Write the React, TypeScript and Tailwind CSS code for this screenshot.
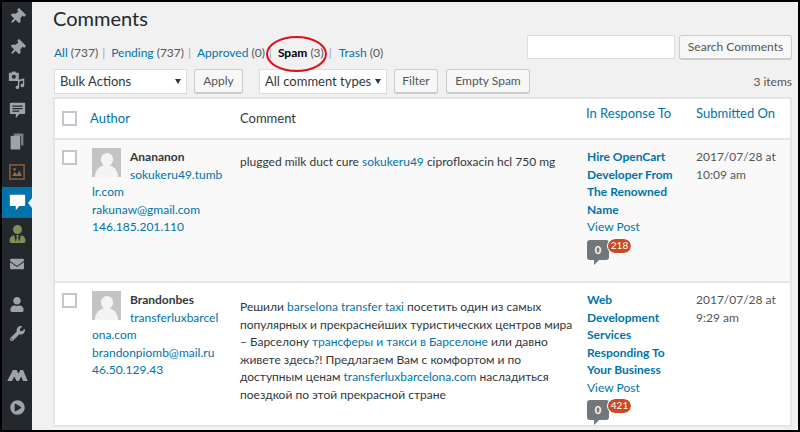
import type { ReactNode } from 'react';
import { FaThumbtack, FaUser, FaUserTie, FaWrench, FaPlayCircle, FaEnvelope } from 'react-icons/fa';

const link = 'text-[#0073aa]';

function MediaIcon() {
  return (
    <svg viewBox="0 0 20 20" className="w-[18px] h-[18px]" fill="#9ea3a8">
      <path d="M1 2h3l1-1.500h3L9 2h3v9H1z" />
      <circle cx="6.500" cy="6.500" r="2.200" fill="#23282d" />
      <path d="M11 10l7-2v8a2 2 0 1 1-1.500-1.900V10.500l-4 1.100V18a2 2 0 1 1-1.500-1.900z" />
    </svg>
  );
}

function CommentsIcon({ fill = '#9ea3a8' }: { fill?: string }) {
  return (
    <svg viewBox="0 0 20 20" className="w-[17px] h-[17px]" fill={fill}>
      <path d="M2 1h16a1 1 0 0 1 1 1v11a1 1 0 0 1-1 1h-6l-4 5v-5H2a1 1 0 0 1-1-1V2a1 1 0 0 1 1-1z" />
      {fill !== '#fff' && <path d="M4 4h12v1.500H4zM4 7h12v1.500H4zM4 10h8v1.500H4z" fill="#23282d" />}
    </svg>
  );
}

function PagesIcon() {
  return (
    <svg viewBox="0 0 20 20" className="w-[16px] h-[17px]" fill="#9ea3a8">
      <path d="M6 0h12v15h-3V3H6z" opacity="0.7" />
      <path d="M2 3h12v17H2z" />
    </svg>
  );
}

function ImageIcon() {
  return (
    <svg viewBox="0 0 20 20" className="w-[16px] h-[16px]">
      <rect x="1" y="1" width="18" height="18" fill="#23282d" stroke="#7d5334" strokeWidth="2.500" />
      <path d="M4 15l3-5 3 3 3-5 3 7z" fill="#8c6a4c" />
      <circle cx="7" cy="6.500" r="1.500" fill="#8c6a4c" />
    </svg>
  );
}

function MLogo() {
  return (
    <svg viewBox="0 0 22 14" className="w-[21px] h-[13px]" fill="#9ea3a8">
      <path d="M0 13L6 1h4l2 4 2-4h3l5 12h-5l-2-5-2.500 5H10L7.500 8 5 13z" />
    </svg>
  );
}

type MenuItem = { icon: ReactNode; cls: string; active?: boolean };

const menu: MenuItem[] = [
  { icon: <FaThumbtack className="w-[16px] h-[16px] rotate-45 text-[#9ea3a8]" />, cls: 'h-[30px]' },
  { icon: <FaThumbtack className="w-[16px] h-[16px] rotate-45 text-[#9ea3a8]" />, cls: 'h-[32px]' },
  { icon: <MediaIcon />, cls: 'h-[31px]' },
  { icon: <CommentsIcon />, cls: 'h-[31px]' },
  { icon: <PagesIcon />, cls: 'h-[30px]' },
  { icon: <ImageIcon />, cls: 'h-[31px]' },
  { icon: <CommentsIcon fill="#fff" />, cls: 'h-[31px]', active: true },
  { icon: <FaUserTie className="w-[17px] h-[18px] text-[#7d9059]" />, cls: 'h-[32px]' },
  { icon: <FaEnvelope className="w-[16px] h-[14px] text-[#9ea3a8]" />, cls: 'h-[28px]' },
  { icon: <FaUser className="w-[14px] h-[15px] text-[#9ea3a8]" />, cls: 'h-[30px] mt-[11px]' },
  { icon: <FaWrench className="w-[15px] h-[15px] text-[#9ea3a8]" />, cls: 'h-[28px]' },
  { icon: <MLogo />, cls: 'h-[30px] mt-[13px]' },
  { icon: <FaPlayCircle className="w-[15px] h-[15px] text-[#9ea3a8]" />, cls: 'h-[34px]' },
];

function Sidebar() {
  return (
    <div className="w-[30px] shrink-0 bg-[#23282d]">
      {menu.map((m, i) => (
        <div
          key={i}
          className={`relative flex items-center justify-center ${m.cls} ${m.active ? 'bg-[#0073aa]' : ''}`}
        >
          {m.icon}
          {m.active && (
            <span className="absolute right-0 top-[11px] border-y-[5px] border-r-[4px] border-y-transparent border-r-[#f1f1f1]" />
          )}
        </div>
      ))}
    </div>
  );
}

function Button({ children, cls }: { children: ReactNode; cls: string }) {
  return (
    <button className={`h-[25px] flex items-center justify-center rounded-[3px] border border-[#cccccc] border-b-2 bg-[#f7f7f7] text-[#555] text-[12px] ${cls}`}>
      {children}
    </button>
  );
}

function Select({ children, cls }: { children: ReactNode; cls: string }) {
  return (
    <div className={`h-[25px] flex items-center justify-between bg-white border border-[#dddddd] pl-[5px] pr-[5px] text-[#32373c] text-[13px] whitespace-nowrap ${cls}`}>
      <span>{children}</span>
      <span className="border-x-[3px] border-t-[5px] border-x-transparent border-t-[#32373c]" />
    </div>
  );
}

function Check() {
  return <input type="checkbox" readOnly className="appearance-none block w-[15px] h-[15px] bg-white border-2 border-[#c3c6ca]" />;
}

function Sep({ cls }: { cls: string }) {
  return <span className={`text-[#a0a5aa] ${cls}`}>|</span>;
}

function Bubbles({ total }: { total: string }) {
  return (
    <div className="relative mt-[3px] w-[44px] h-[26px]">
      <div className="absolute left-0 top-[1px] w-[22px] h-[20px] rounded-[3px] bg-[#72777c] flex items-center justify-center text-white text-[11px] font-bold">
        0
      </div>
      <div className="absolute left-[7px] top-[21px] border-r-[5px] border-t-[5px] border-r-transparent border-t-[#72777c]" />
      <div className="absolute left-[21px] top-0 h-[14px] w-[23px] rounded-full bg-[#ca4a1f] flex items-center justify-center text-white text-[10px] outline outline-white">
        {total}
      </div>
    </div>
  );
}

type Row = {
  name: string;
  url: string;
  email: string;
  ip: string;
  comment: ReactNode;
  post: string;
  date: string;
  time: string;
  total: string;
  cls: string;
  commentCls: string;
};

const rows: Row[] = [
  {
    name: 'Anananon',
    url: 'sokukeru49.tumblr.com',
    email: 'rakunaw@gmail.com',
    ip: '146.185.201.110',
    comment: (
      <>
        plugged milk duct cure <a className={link}>sokukeru49</a> ciprofloxacin hcl 750 mg
      </>
    ),
    post: 'Hire OpenCart Developer From The Renowned Name',
    date: '2017/07/28 at',
    time: '10:09 am',
    total: '218',
    cls: 'bg-[#f9f9f9] h-[143px]',
    commentCls: 'pt-[5px]',
  },
  {
    name: 'Brandonbes',
    url: 'transferluxbarcelona.com',
    email: 'brandonpiomb@mail.ru',
    ip: '46.50.129.43',
    comment: (
      <>
        Решили <a className={link}>barselona transfer taxi</a> посетить один из самых популярных и прекраснейших туристических центров мира – Барселону{' '}
        <a className={link}>трансферы и такси в Барселоне</a> или давно живете здесь?! Предлагаем Вам с комфортом и по доступным ценам{' '}
        <a className={link}>transferluxbarcelona.com</a> насладиться поездкой по этой прекрасной стране
      </>
    ),
    post: 'Web Development Services Responding To Your Business',
    date: '2017/07/28 at',
    time: '9:29 am',
    total: '421',
    cls: 'bg-white',
    commentCls: 'pt-[7px]',
  },
];

const cols = 'grid grid-cols-[29px_156px_346px_110px_1fr]';

export default function App() {
  return (
    <div
      className="w-[800px] h-[432px] bg-black p-[2px] overflow-hidden flex"
      style={{ fontFamily: 'Lato, sans-serif' }}
    >
      <Sidebar />
      <main className="relative flex-1 bg-[#f1f1f1] pl-[21px] pr-[6px] text-[12px] leading-[17.500px] text-[#555] overflow-hidden">
        <h1 className="pt-[2px] h-[33px] text-[20px] leading-[28px] text-[#23282d]">Comments</h1>

        <div className="flex justify-between items-start h-[25px]">
          <div className="pt-[9px] pl-px flex whitespace-nowrap">
            <span><a className={link}>All</a> (737)</span>
            <Sep cls="ml-[4px] mr-[6px]" />
            <span><a className={link}>Pending</a> (737)</span>
            <Sep cls="ml-[4px] mr-[6px]" />
            <span><a className={link}>Approved</a> (0)</span>
            <Sep cls="ml-[4px] mr-[6px]" />
            <span><b className="font-bold text-black">Spam</b> (3)</span>
            <Sep cls="ml-[5px] mr-[7px]" />
            <span><a className={link}>Trash</a> (0)</span>
          </div>
          <div className="flex gap-[4px]">
            <input readOnly className="w-[148px] h-[24px] bg-white border border-[#dddddd]" />
            <Button cls="w-[113px]">Search Comments</Button>
          </div>
        </div>

        <div className="flex items-center mt-[9px] pl-px">
          <Select cls="w-[133px]">Bulk Actions</Select>
          <Button cls="w-[49px] ml-[7px]">Apply</Button>
          <Select cls="w-[128px] ml-[16px]">All comment types</Select>
          <Button cls="w-[44px] ml-[7px]">Filter</Button>
          <Button cls="w-[84px] ml-[8px]">Empty Spam</Button>
          <span className="ml-auto">3 items</span>
        </div>

        <section className="mt-[3px] border-2 border-[#e5e5e5] border-b-0 bg-white">
          <div className={`${cols} h-[41px] border-b-2 border-[#e5e5e5] bg-white`}>
            <div className="pl-[7px] pt-[12px]"><Check /></div>
            <a className={`${link} pl-[6px] pt-[11px] text-[13px]`}>Author</a>
            <span className="pt-[11px] text-[13px] text-[#32373c]">Comment</span>
            <a className={`${link} pt-[6px] text-[13px]`}>In Response To</a>
            <a className={`${link} pt-[6px] text-[13px]`}>Submitted On</a>
          </div>
          {rows.map((r) => (
            <article key={r.name} className={`${cols} ${r.cls} border-b-2 border-[#e5e5e5] pt-[8px]`}>
              <div className="pl-[7px] pt-[2px]"><Check /></div>
              <div className="pl-[8px] pr-[16px] break-all">
                <div className="float-left w-[29px] h-[29px] mr-[9px] bg-[#c4c4c4] relative overflow-hidden">
                  <div className="absolute left-[9px] top-[5px] w-[12px] h-[13px] rounded-full bg-[#f4f4f4]" />
                  <div className="absolute left-[3px] top-[17px] w-[23px] h-[16px] rounded-t-full bg-[#f4f4f4]" />
                </div>
                <div className="font-bold text-[#32373c]">{r.name}</div>
                <a className={link}>{r.url}</a>
                <br />
                <a className={link}>{r.email}</a>
                <br />
                <a className={link}>{r.ip}</a>
              </div>
              <p className={`${r.commentCls} pr-[11px] text-[#32373c]`}>{r.comment}</p>
              <div className="pl-px pr-[14px]">
                <a className={`${link} font-bold block`}>{r.post}</a>
                <a className={`${link} block`}>View Post</a>
                <Bubbles total={r.total} />
              </div>
              <div className="whitespace-nowrap">
                {r.date}
                <br />
                {r.time}
              </div>
            </article>
          ))}
        </section>

        {/* hand drawn circle around the Spam filter */}
        <div className="absolute left-[234px] top-[34px] w-[61px] h-[36px] rounded-[50%] border-2 border-[#e0101c]" />
      </main>
    </div>
  );
}
